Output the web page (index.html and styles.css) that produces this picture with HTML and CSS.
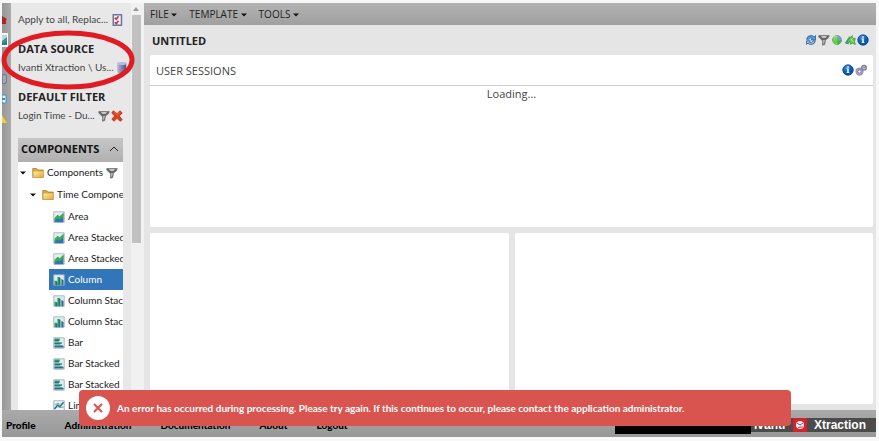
FILE: index.html
```html
<!DOCTYPE html>
<html lang="en">
<head>
    <meta charset="UTF-8">
    <meta name="viewport" content="width=device-width, initial-scale=1.0">
    <title>Xtraction - Untitled</title>
    <link rel="stylesheet" href="styles.css">
</head>
<body>
    <!-- Icon set -->
    <svg class="sprite" aria-hidden="true">
        <defs>
            <linearGradient id="gold" x1="0" y1="0" x2="1" y2="1">
                <stop offset="0" stop-color="#fdeeb0"/>
                <stop offset="1" stop-color="#e0a92f"/>
            </linearGradient>
            <linearGradient id="steel">
                <stop offset="0" stop-color="#b4b8dc"/>
                <stop offset="1" stop-color="#4a4f88"/>
            </linearGradient>
            <radialGradient id="blueball" cx="0.4" cy="0.3">
                <stop offset="0" stop-color="#3f95e0"/>
                <stop offset="1" stop-color="#0650a8"/>
            </radialGradient>
        </defs>
        <symbol id="i-folder" viewBox="0 0 16 16">
            <path d="M1 2h5l2 2h7v10H1z" fill="#dba63a" stroke="#a87a22"/>
            <path d="M2 6h13v8H2z" fill="url(#gold)"/>
        </symbol>
        <symbol id="i-filter" viewBox="0 0 16 16">
            <path d="M1 2h14l-1 3-4 3-1 6-3 1V9L1 4z" fill="#666" stroke="#777"/>
            <path d="M4 3h8l-2 2H6z" fill="#e8e8e8"/>
            <path d="M7 8h2l-1 5H7z" fill="#ccc"/>
        </symbol>
        <symbol id="i-delete" viewBox="0 0 16 16">
            <path d="M3 1l5 4 4-4 3 3-4 4 4 5-3 2-4-4-4 4-3-3 4-4-4-4z" fill="#e23a1c" stroke="#b92a12"/>
            <path d="M4 3l4 4 4-4" fill="none" stroke="#f58466"/>
        </symbol>
        <symbol id="i-check" viewBox="0 0 16 16">
            <path d="M3 1h11v14H3z" fill="#eef1fa" stroke="#6a76a8" stroke-width="2"/>
            <path d="M5 5l2 2 3-4M5 11l2 2 3-4" fill="none" stroke="#c8322b" stroke-width="2"/>
        </symbol>
        <symbol id="i-database" viewBox="0 0 16 16">
            <path d="M3 1h12v13q-6 3-12 0z" fill="url(#steel)"/>
            <ellipse cx="9" cy="2" rx="6" ry="2" fill="#b9bddd"/>
        </symbol>
        <symbol id="i-area" viewBox="0 0 16 16">
            <path d="M1 1h14v14H1z" fill="#e4eef5" stroke="#9aa9b5"/>
            <path d="M2 11l4-3 3 1 5-6v12H2z" fill="#2f76b5"/>
            <path d="M2 9l4-4 3 2 5-5v5l-5 4-3-1-4 3z" fill="#3fae4a"/>
        </symbol>
        <symbol id="i-column" viewBox="0 0 16 16">
            <path d="M1 1h14v14H1z" fill="#dfebf2" stroke="#9aa9b5"/>
            <path d="M2 9h3v6H2zM6 4h3v11H6zM11 7h2v8h-2z" fill="#2ba04b"/>
            <path d="M4 10h2v5H4zM8 5h2v10H8zM12 8h2v7h-2z" fill="#2a6a9c"/>
        </symbol>
        <symbol id="i-bar" viewBox="0 0 16 16">
            <path d="M1 1h14v14H1z" fill="#dfebf2" stroke="#9aa9b5"/>
            <path d="M2 2h7v3H2zM2 7h10v2H2zM2 11h11v2H2z" fill="#2ba04b"/>
            <path d="M2 4h6v2H2zM2 8h8v2H2zM2 12h12v2H2z" fill="#2a6a9c"/>
        </symbol>
        <symbol id="i-line" viewBox="0 0 16 16">
            <path d="M1 1h14v14H1z" fill="#f1f5f9" stroke="#8b9bab"/>
            <path d="M1 5h14M1 10h14" stroke="#c3ced8"/>
            <path d="M2 12l4-5 3 2 5-6" fill="none" stroke="#2a6a9c" stroke-width="2"/>
            <path d="M2 7l5-3 3 6 4-1" fill="none" stroke="#3fae4a"/>
        </symbol>
        <symbol id="i-refresh" viewBox="0 0 16 16">
            <path d="M2 7q1-5 6-5 3 0 4 2l2-2v6H8l2-2q-3-2-5 1z" fill="#5c9bdc" stroke="#25599c"/>
            <path d="M14 9q-1 5-6 5-3 0-4-2l-2 2V9h5l-1 2q3 2 5-2z" fill="#8bbcf0" stroke="#25599c"/>
        </symbol>
        <symbol id="i-globe" viewBox="0 0 16 16">
            <circle cx="8" cy="8" r="6" fill="#6ba8bc" stroke="#69948c"/>
            <path d="M4 3q3-2 5 0l-2 4-4 1z" fill="#96d879"/>
            <path d="M1 8h4V5l5 4-1 6-5-3z" fill="#62d63a"/>
            <path d="M8 9l7-1-6 7z" fill="#45b52e"/>
        </symbol>
        <symbol id="i-share" viewBox="0 0 16 16">
            <path d="M1 12l6-9 2 2-3 9z" fill="#4e9b93"/>
            <path d="M6 7l5-5v3l4 1-1 4 1 4-4-2-2 2-1-4-5 3z" fill="#5bcb45" stroke="#369244"/>
            <path d="M10 8l3 3M12 5l-3 3" stroke="#d9f5ca"/>
        </symbol>
        <symbol id="i-info" viewBox="0 0 16 16">
            <circle cx="8" cy="8" r="7" fill="url(#blueball)" stroke="#07479b"/>
            <path d="M7 3h2v2H7zM6 6h3v5h1v1H6v-1h1V7H6z" fill="#fff"/>
        </symbol>
        <symbol id="i-gears" viewBox="0 0 16 16">
            <circle cx="6" cy="10" r="4" fill="#c4c2dc" stroke="#9c99bb" stroke-width="3"/>
            <circle cx="6" cy="10" r="2" fill="#fff" stroke="#73708f"/>
            <circle cx="12" cy="5" r="3" fill="#d8d7e6" stroke="#807e99" stroke-width="2"/>
            <circle cx="12" cy="5" r="1" fill="#666"/>
        </symbol>
        <symbol id="i-caret" viewBox="0 0 8 8">
            <path d="M0 2h8L4 6z" fill="currentColor"/>
        </symbol>
    </svg>

    <div class="workspace">
        <!-- Collapsed icon strip -->
        <nav class="strip" aria-label="Views">
            <svg viewBox="0 0 6 12"><path d="M0 3l5 3-1 1v4H0z" fill="#b3202c"/></svg>
            <svg class="active" viewBox="0 0 6 12"><path d="M0 1h5v10H0z" fill="#b9d6ee"/><path d="M0 7l5-4v8H0z" fill="#3f9b66"/><path d="M0 9l5-2v4H0z" fill="#2f76b5"/></svg>
            <svg viewBox="0 0 6 12"><path d="M0 2h4v8H0z" fill="#eee" stroke="#555d80"/><path d="M0 4h3M0 6h3M0 8h3" stroke="#555d80"/></svg>
            <svg viewBox="0 0 6 12"><path d="M0 2h4v8H0z" fill="#e9f4fd" stroke="#3b8ed0"/><path d="M0 5h3v2H0z" fill="#3b8ed0"/></svg>
            <svg viewBox="0 0 6 12"><path d="M0 2l5 8H0z" fill="#f8cf29"/></svg>
        </nav>

        <aside class="sidebar">
            <div class="setting">
                <span>Apply to all, Replac...</span>
                <button class="icon-button" aria-label="Edit options"><svg class="icon"><use href="#i-check"/></svg></button>
            </div>
            <h2>DATA SOURCE</h2>
            <div class="setting">
                <span>Ivanti Xtraction \ Us...</span>
                <button class="icon-button" aria-label="Choose data source"><svg class="icon"><use href="#i-database"/></svg></button>
            </div>
            <h2>DEFAULT FILTER</h2>
            <div class="setting">
                <span>Login Time - Du...</span>
                <button class="icon-button" aria-label="Edit filter"><svg class="icon"><use href="#i-filter"/></svg></button>
                <button class="icon-button" aria-label="Remove filter"><svg class="icon"><use href="#i-delete"/></svg></button>
            </div>

            <button class="panel-header">
                COMPONENTS
                <svg class="chevron" viewBox="0 0 10 6"><path d="M1 5l4-4 4 4" fill="none" stroke="#222"/></svg>
            </button>
            <ul class="tree">
                <li>
                    <div class="node"><svg class="caret"><use href="#i-caret"/></svg><svg class="icon"><use href="#i-folder"/></svg>Components <svg class="icon"><use href="#i-filter"/></svg></div>
                    <ul>
                        <li>
                            <div class="node level-2"><svg class="caret"><use href="#i-caret"/></svg><svg class="icon"><use href="#i-folder"/></svg>Time Components</div>
                            <ul>
                                <li class="node leaf"><svg class="icon"><use href="#i-area"/></svg>Area</li>
                                <li class="node leaf"><svg class="icon"><use href="#i-area"/></svg>Area Stacked</li>
                                <li class="node leaf"><svg class="icon"><use href="#i-area"/></svg>Area Stacked 100%</li>
                                <li class="node leaf selected"><svg class="icon"><use href="#i-column"/></svg>Column</li>
                                <li class="node leaf"><svg class="icon"><use href="#i-column"/></svg>Column Stacked</li>
                                <li class="node leaf"><svg class="icon"><use href="#i-column"/></svg>Column Stacked 100%</li>
                                <li class="node leaf"><svg class="icon"><use href="#i-bar"/></svg>Bar</li>
                                <li class="node leaf"><svg class="icon"><use href="#i-bar"/></svg>Bar Stacked</li>
                                <li class="node leaf"><svg class="icon"><use href="#i-bar"/></svg>Bar Stacked 100%</li>
                                <li class="node leaf"><svg class="icon"><use href="#i-line"/></svg>Line</li>
                            </ul>
                        </li>
                    </ul>
                </li>
            </ul>

            <svg class="marker" viewBox="0 0 134 62" aria-hidden="true">
                <ellipse cx="67" cy="31" rx="64" ry="27" fill="none" stroke="#e01b24" stroke-width="5"/>
            </svg>
        </aside>

        <div class="scrollbar" aria-hidden="true">
            <svg viewBox="0 0 8 8"><path d="M1 6l3-4 3 4z" fill="#999"/></svg>
            <div class="thumb"></div>
        </div>

        <main class="content">
            <div class="menubar">
                <button>FILE <svg class="caret"><use href="#i-caret"/></svg></button>
                <button>TEMPLATE <svg class="caret"><use href="#i-caret"/></svg></button>
                <button>TOOLS <svg class="caret"><use href="#i-caret"/></svg></button>
            </div>
            <div class="title-row">
                <h1>UNTITLED</h1>
                <div class="tools">
                    <button class="icon-button" aria-label="Refresh"><svg class="icon"><use href="#i-refresh"/></svg></button>
                    <button class="icon-button" aria-label="Filter"><svg class="icon"><use href="#i-filter"/></svg></button>
                    <button class="icon-button" aria-label="Publish"><svg class="icon"><use href="#i-globe"/></svg></button>
                    <button class="icon-button" aria-label="Share"><svg class="icon"><use href="#i-share"/></svg></button>
                    <button class="icon-button" aria-label="Information"><svg class="icon"><use href="#i-info"/></svg></button>
                </div>
            </div>
            <div class="board">
                <section class="card wide">
                    <div class="card-header">
                        <h3>USER SESSIONS</h3>
                        <div class="tools">
                            <button class="icon-button" aria-label="Information"><svg class="icon"><use href="#i-info"/></svg></button>
                            <button class="icon-button" aria-label="Settings"><svg class="icon"><use href="#i-gears"/></svg></button>
                        </div>
                    </div>
                    <p class="loading">Loading...</p>
                </section>
                <section class="card"></section>
                <section class="card"></section>
            </div>
        </main>
    </div>

    <footer class="footer">
        <nav class="links">
            <a href="#">Profile</a>
            <a href="#">Administration</a>
            <a href="#">Documentation</a>
            <a href="#">About</a>
            <a href="#">Logout</a>
        </nav>
        <div class="redacted"></div>
        <div class="brand">
            <span>ivanti</span>
            <svg class="brand-mark" viewBox="0 0 14 14">
                <path d="M0 0h14v14H0z" fill="#d5222b"/>
                <circle cx="7" cy="7" r="4" fill="#fff"/>
                <path d="M4 5l3 2 3-2M5 10l2-1 3 0" fill="none" stroke="#d5222b"/>
            </svg>
            <span>Xtraction</span>
        </div>
    </footer>

    <!-- Error message -->
    <div class="toast" role="alert">
        <svg class="toast-icon" viewBox="0 0 24 24">
            <circle cx="12" cy="12" r="12" fill="#fff"/>
            <path d="M8 8l8 8M16 8l-8 8" stroke="#d9534f" stroke-width="2"/>
        </svg>
        An error has occurred during processing. Please try again. If this continues to occur, please contact the application administrator.
    </div>
</body>
</html>
```
FILE: styles.css
```css
* {
    margin: 0;
    padding: 0;
    box-sizing: border-box;
}

body {
    display: flex;
    flex-direction: column;
    height: 100vh;
    padding: 3px 3px 4px 2px;
    overflow: hidden;
    background-color: #f8f8f8;
    font-family: 'Open Sans', 'Noto Sans', sans-serif;
    font-size: 11px;
    line-height: 15px;
    color: #444;
}

button {
    border: none;
    background: none;
    font: inherit;
    color: inherit;
    cursor: pointer;
}

ul {
    list-style: none;
}

.sprite {
    position: absolute;
    width: 0;
    height: 0;
}

.icon {
    display: block;
    flex: none;
    width: 12px;
    height: 12px;
}

.caret {
    flex: none;
    width: 6px;
    height: 6px;
    color: #111;
}

.workspace {
    display: flex;
    flex: 1;
    min-height: 0;
}

/* Left side */
.strip {
    display: flex;
    flex-direction: column;
    gap: 8px;
    width: 9px;
    padding-top: 10px;
    background: linear-gradient(to right, #979797, #aaa);
}

.strip svg {
    width: 6px;
    height: 12px;
}

.strip .active {
    height: 14px;
    margin-bottom: 18px;
    background-color: #fff;
}

.sidebar {
    position: relative;
    display: flex;
    flex-direction: column;
    width: 120px;
    padding: 9px 8px 0 7px;
    background-color: #e8e8e8;
}

.setting {
    display: flex;
    align-items: center;
    gap: 1px;
    font-family: 'Lato', sans-serif;
    font-size: 10px;
    white-space: nowrap;
    color: #444;
}

.setting span {
    flex: 1;
}

.sidebar h2 {
    margin: 14px 0 4px;
    font-size: 11px;
    line-height: 15px;
    color: #222;
}

.panel-header {
    display: flex;
    flex: none;
    align-items: center;
    justify-content: space-between;
    height: 24px;
    margin-top: 15px;
    padding: 0 4px 3px 3px;
    background: linear-gradient(#c6c6c6, #b0b0b0);
    font-weight: bold;
    color: #111;
}

.chevron {
    width: 10px;
    height: 6px;
}

.tree {
    flex: 1;
    min-height: 0;
    overflow: hidden;
    background-color: #fff;
    font-family: 'Lato', sans-serif;
    font-size: 10px;
    color: #222;
}

.tree ul {
    padding-top: 1px;
}

.node {
    display: flex;
    align-items: center;
    gap: 3px;
    height: 21px;
    padding-left: 2px;
    white-space: nowrap;
}

.node .caret {
    margin-right: 3px;
}

.level-2 {
    padding-left: 12px;
}

.leaf {
    margin-left: 31px;
    padding-left: 4px;
}

.selected {
    background-color: #3375b9;
    color: #fff;
}

/* Hand-drawn ring around the data source */
.marker {
    position: absolute;
    top: 26px;
    left: -10px;
    z-index: 1;
    width: 134px;
    height: 62px;
}

.scrollbar {
    display: flex;
    flex-direction: column;
    align-items: center;
    width: 13px;
    padding-right: 3px;
    background-color: #f1f1f1;
}

.scrollbar svg {
    width: 8px;
    height: 12px;
}

.thumb {
    width: 9px;
    height: 56%;
    background-color: #c1c1c1;
}

/* Dashboard */
.content {
    display: flex;
    flex: 1;
    flex-direction: column;
    min-width: 0;
    background-color: #e5e5e5;
}

.menubar {
    display: flex;
    gap: 12px;
    height: 22px;
    padding-left: 6px;
    background: linear-gradient(#b3b3b3, #a0a0a0);
}

.menubar button {
    font-size: 10px;
    color: #222;
}

.title-row {
    display: flex;
    align-items: center;
    justify-content: space-between;
    height: 30px;
    padding: 0 7px 0 8px;
}

h1 {
    font-size: 11px;
    color: #222;
}

.tools {
    display: flex;
    gap: 1px;
}

.board {
    display: grid;
    flex: 1;
    grid-template-columns: 1fr 1fr;
    grid-template-rows: 1fr 1fr;
    gap: 6px;
    padding: 0 3px 6px 6px;
}

.card {
    border-radius: 2px;
    background-color: #fff;
}

.wide {
    grid-column: 1 / 3;
}

.card-header {
    display: flex;
    align-items: center;
    justify-content: space-between;
    height: 31px;
    padding: 0 6px;
    border-bottom: 1px solid #ccc;
}

.card-header h3 {
    font-size: 11px;
    font-weight: normal;
}

.loading {
    text-align: center;
}

/* Footer */
.footer {
    display: flex;
    align-items: center;
    height: 27px;
    padding-top: 3px;
    background: linear-gradient(#aaa, #989898);
}

.links {
    display: flex;
    flex: 1;
    gap: 29px;
    padding-left: 4px;
    font-family: 'Lato', sans-serif;
    font-size: 10px;
}

.links a {
    font-weight: 900;
    color: #000;
    text-decoration: none;
}

.redacted {
    align-self: flex-end;
    width: 136px;
    height: 10px;
    margin-bottom: 3px;
    background-color: #000;
}

.brand {
    display: flex;
    align-items: center;
    justify-content: space-between;
    width: 125px;
    height: 14px;
    padding: 0 10px 0 3px;
    background-color: #4b4b4b;
    font-family: 'Liberation Sans', Arial, sans-serif;
    font-size: 12px;
    font-weight: bold;
    color: #fff;
}

.brand-mark {
    width: 14px;
    height: 14px;
}

.toast {
    position: absolute;
    bottom: 15px;
    left: 9%;
    z-index: 2;
    display: flex;
    align-items: center;
    gap: 7px;
    width: 81%;
    height: 36px;
    padding: 0 7px;
    border-radius: 4px;
    background-color: #d9534f;
    font-family: 'Lato', sans-serif;
    font-size: 10px;
    font-weight: bold;
    white-space: nowrap;
    color: #fff;
}

.toast-icon {
    flex: none;
    width: 24px;
    height: 24px;
}
```
